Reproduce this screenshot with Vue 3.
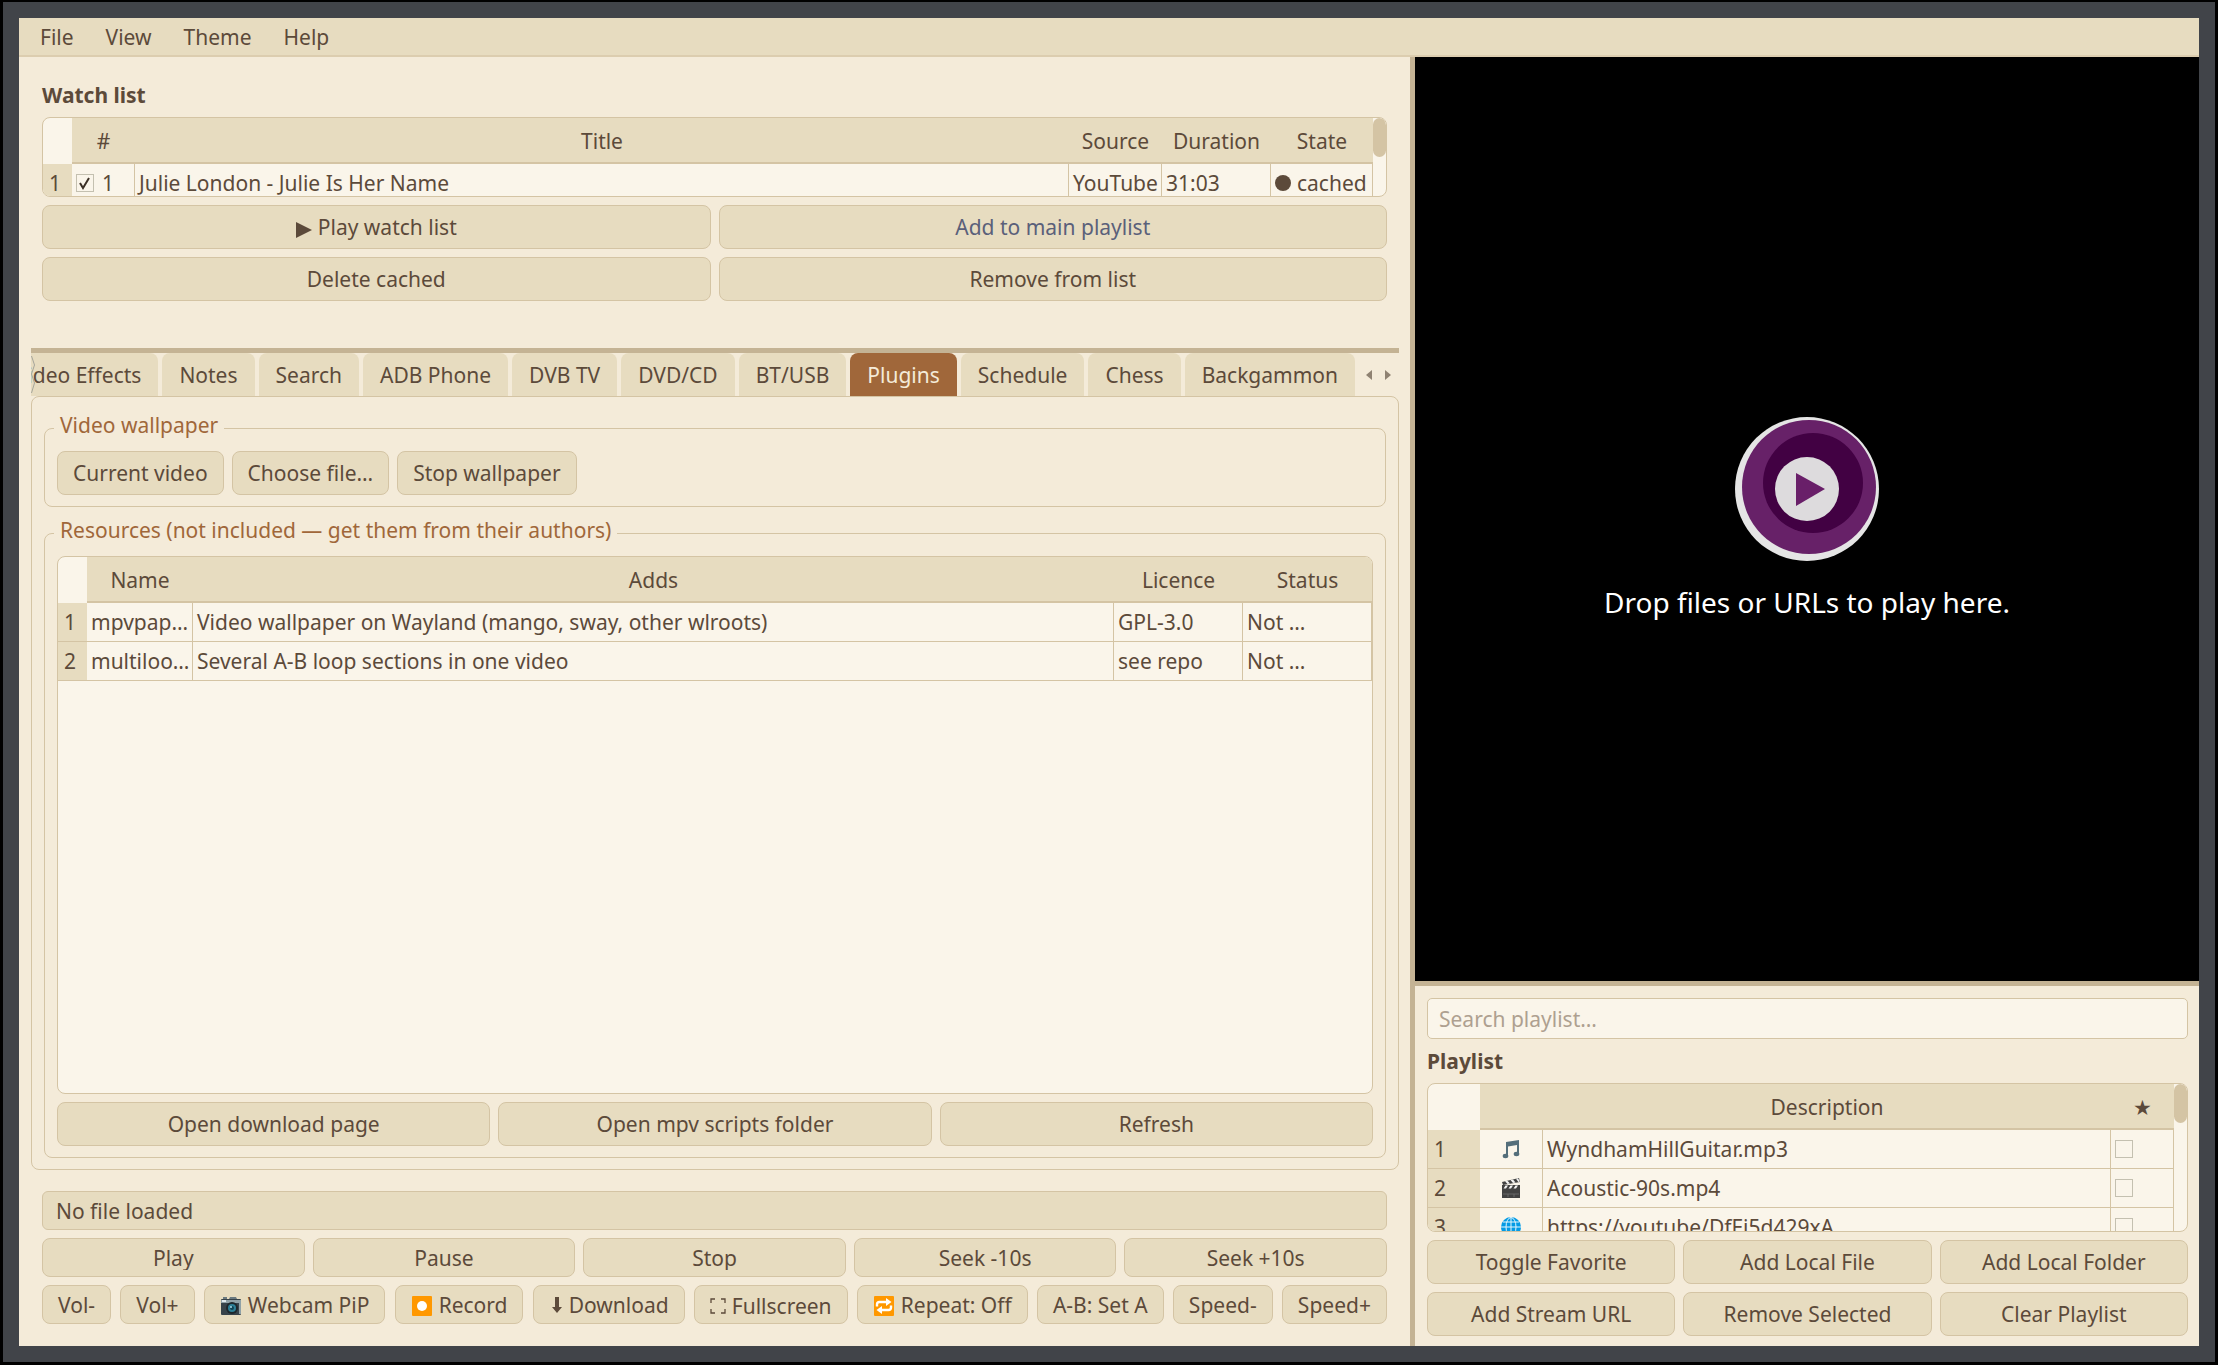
<script setup>
import { ref } from 'vue'

const menus = ['File', 'View', 'Theme', 'Help']
const tabs = [
  'Video Effects', 'Notes', 'Search', 'ADB Phone', 'DVB TV', 'DVD/CD',
  'BT/USB', 'Plugins', 'Schedule', 'Chess', 'Backgammon'
]
const activeTab = ref('Plugins')
const resources = [
  { name: 'mpvpap…', adds: 'Video wallpaper on Wayland (mango, sway, other wlroots)', licence: 'GPL-3.0', status: 'Not …' },
  { name: 'multiloo…', adds: 'Several A-B loop sections in one video', licence: 'see repo', status: 'Not …' }
]
const transport = ['Play', 'Pause', 'Stop', 'Seek -10s', 'Seek +10s']
const playlist = [
  { icon: 'music', title: 'WyndhamHillGuitar.mp3' },
  { icon: 'clapper', title: 'Acoustic-90s.mp4' },
  { icon: 'globe', title: 'https://youtube/DfEj5d429xA' }
]
const playlistActions = [
  'Toggle Favorite', 'Add Local File', 'Add Local Folder',
  'Add Stream URL', 'Remove Selected', 'Clear Playlist'
]
const watched = ref(true)
const query = ref('')
</script>

<template>
  <div class="screen">
    <div class="window">
      <nav class="menubar">
        <button v-for="m in menus" :key="m" type="button">{{ m }}</button>
      </nav>

      <div class="body">
        <main class="left">
          <section class="watch">
            <h2>Watch list</h2>
            <div class="table-box watch-box">
              <table>
                <colgroup>
                  <col class="c-row"><col class="c-num"><col><col class="c-source"><col class="c-duration"><col class="c-state">
                </colgroup>
                <thead>
                  <tr><td class="corner"></td><th>#</th><th>Title</th><th>Source</th><th>Duration</th><th>State</th></tr>
                </thead>
                <tbody>
                  <tr>
                    <th scope="row">1</th>
                    <td><label class="check"><input v-model="watched" type="checkbox">1</label></td>
                    <td>Julie London - Julie Is Her Name</td>
                    <td>YouTube</td>
                    <td>31:03</td>
                    <td><span class="state"><i class="dot"></i>cached</span></td>
                  </tr>
                </tbody>
              </table>
              <div class="scroll"><div class="thumb"></div></div>
            </div>
            <div class="grid two">
              <button class="btn" type="button">
                <svg class="play-glyph" viewBox="0 0 16 16"><path d="M0 0L16 8L0 16Z" fill="currentColor" /></svg>Play watch list
              </button>
              <button class="btn blue" type="button">Add to main playlist</button>
              <button class="btn" type="button">Delete cached</button>
              <button class="btn" type="button">Remove from list</button>
            </div>
          </section>

          <section class="tools">
            <div class="tabbar">
              <div class="tabs" role="tablist">
                <button
                  v-for="t in tabs" :key="t" type="button" role="tab" class="tab"
                  :class="{ active: t === activeTab }" :aria-selected="t === activeTab" @click="activeTab = t"
                >{{ t }}</button>
                <svg class="tear" viewBox="0 0 5 40" fill="none" stroke="#a5a59a"><path d="M0.5 1L3.5 10L0.5 19L3.5 28L0.5 38" /></svg>
              </div>
              <button class="arrow" type="button" aria-label="Scroll tabs left">
                <svg viewBox="0 0 6 10"><path d="M6 0V10L0 5Z" fill="#8f8272" /></svg>
              </button>
              <button class="arrow" type="button" aria-label="Scroll tabs right">
                <svg viewBox="0 0 6 10"><path d="M0 0V10L6 5Z" fill="#8f8272" /></svg>
              </button>
            </div>

            <div class="pane">
              <fieldset>
                <legend>Video wallpaper</legend>
                <div class="inline">
                  <button class="btn" type="button">Current video</button>
                  <button class="btn" type="button">Choose file…</button>
                  <button class="btn" type="button">Stop wallpaper</button>
                </div>
              </fieldset>
              <fieldset class="resources">
                <legend>Resources (not included — get them from their authors)</legend>
                <div class="table-box fill">
                  <table>
                    <colgroup>
                      <col class="c-row"><col class="c-name"><col><col class="c-wide"><col class="c-wide">
                    </colgroup>
                    <thead>
                      <tr><td class="corner"></td><th>Name</th><th>Adds</th><th>Licence</th><th>Status</th></tr>
                    </thead>
                    <tbody>
                      <tr v-for="(r, i) in resources" :key="r.name">
                        <th scope="row">{{ i + 1 }}</th>
                        <td>{{ r.name }}</td><td>{{ r.adds }}</td><td>{{ r.licence }}</td><td>{{ r.status }}</td>
                      </tr>
                    </tbody>
                  </table>
                </div>
                <div class="grid three">
                  <button class="btn" type="button">Open download page</button>
                  <button class="btn" type="button">Open mpv scripts folder</button>
                  <button class="btn" type="button">Refresh</button>
                </div>
              </fieldset>
            </div>
          </section>

          <section class="controls">
            <div class="status">No file loaded</div>
            <div class="grid five">
              <button v-for="t in transport" :key="t" class="btn short" type="button"><span class="clip">{{ t }}</span></button>
            </div>
            <div class="spread">
              <button class="btn short" type="button">Vol-</button>
              <button class="btn short" type="button">Vol+</button>
              <button class="btn short" type="button">
                <svg class="emoji" viewBox="0 0 22 22">
                  <path d="M3 2h4v3H3z" fill="#6b7a80" />
                  <path d="M8 6L10 2h6l2 4z" fill="#6b7a80" />
                  <rect x="1" y="4" width="20" height="16" rx="1" fill="#37434a" />
                  <path d="M1 5h20v3H1z" fill="#8fa1a7" />
                  <rect x="2" y="5" width="4" height="2" fill="#dfe9ec" />
                  <path d="M19 8h2v11h-2z" fill="#8fa1a7" />
                  <circle cx="12" cy="13" r="6" fill="#1d272c" />
                  <circle cx="12" cy="13" r="4" fill="#2c7f96" />
                  <circle cx="12" cy="13" r="2" fill="#0f4253" />
                  <circle cx="11" cy="12" r="1" fill="#a9dbe8" />
                </svg>Webcam PiP
              </button>
              <button class="btn short" type="button">
                <svg class="emoji" viewBox="0 0 22 22">
                  <rect x="1" y="1" width="20" height="20" rx="1" fill="#ff9800" />
                  <circle cx="11" cy="11" r="5" fill="#fff" />
                </svg>Record
              </button>
              <button class="btn short" type="button">
                <svg class="down" viewBox="0 0 12 18"><path d="M4 1h4v10h3L6 17L1 11h3z" fill="currentColor" /></svg>Download
              </button>
              <button class="btn short full" type="button">
                <svg class="corners" viewBox="0 0 16 16" fill="none" stroke="currentColor" stroke-width="1.3">
                  <path d="M1 5V1H5M11 1H15V5M15 11V15H11M5 15H1V11" />
                </svg>Fullscreen
              </button>
              <button class="btn short" type="button">
                <svg class="emoji" viewBox="0 0 22 22">
                  <rect x="1" y="1" width="20" height="20" rx="1" fill="#ff9800" />
                  <g fill="none" stroke="#fff" stroke-width="2.4">
                    <path d="M4 11.5V9.5Q4 7 6.500 7H14" /><path d="M18 10.500V12.500Q18 15 15.500 15H8" />
                  </g>
                  <path d="M13 3L18.500 7L13 11ZM9 11L3.500 15L9 19Z" fill="#fff" />
                </svg>Repeat: Off
              </button>
              <button class="btn short" type="button">A-B: Set A</button>
              <button class="btn short" type="button">Speed-</button>
              <button class="btn short" type="button">Speed+</button>
            </div>
          </section>
        </main>

        <aside class="right">
          <div class="video">
            <svg class="logo" viewBox="0 0 144 144">
              <circle cx="72" cy="72" r="72" fill="#e5e5e5" />
              <circle cx="74" cy="70" r="67" fill="#672168" />
              <circle cx="78" cy="66" r="50" fill="#420143" />
              <circle cx="72" cy="72" r="32" fill="#dddbdd" />
              <path d="M61 56V89L90 72Z" fill="#691f69" />
            </svg>
            <p>Drop files or URLs to play here.</p>
          </div>
          <section class="list">
            <input v-model="query" class="search" type="text" placeholder="Search playlist…" aria-label="Search playlist">
            <h2>Playlist</h2>
            <div class="table-box list-box">
              <table>
                <colgroup>
                  <col class="c-index"><col class="c-icon"><col><col class="c-icon">
                </colgroup>
                <thead>
                  <tr><td class="corner"></td><th></th><th>Description</th><th>★</th></tr>
                </thead>
                <tbody>
                  <tr v-for="(p, i) in playlist" :key="p.title">
                    <th scope="row">{{ i + 1 }}</th>
                    <td class="icon">
                      <svg v-if="p.icon === 'music'" viewBox="0 0 20 20">
                        <path d="M5 3L18 1V15H16V6L7 7.500V17H5Z" fill="#546e7a" />
                        <ellipse cx="4.500" cy="17" rx="2.800" ry="2.200" fill="#546e7a" /><ellipse cx="15.500" cy="15" rx="2.800" ry="2.200" fill="#546e7a" />
                      </svg>
                      <svg v-else-if="p.icon === 'clapper'" viewBox="0 0 20 20">
                        <path d="M1 4L18 0L19 4L2 7Z" fill="#424242" />
                        <path d="M4 3.300L6.500 2.700L9 5.500L6.500 6ZM9.500 2L12 1.400L14.500 4.400L12 5ZM15 .7L17 .2L18.800 3.500L17.300 3.900Z" fill="#f3f3f3" />
                        <rect x="1" y="7" width="18" height="13" fill="#424242" />
                        <path d="M4.500 7.500H7L5 10.500H2.500ZM9.500 7.500H12L10 10.500H7.500ZM14.500 7.500H17L15 10.500H12.500Z" fill="#f3f3f3" />
                        <path d="M2 16H18M7 16V19M13 16V19" stroke="#777" stroke-width=".7" />
                      </svg>
                      <svg v-else viewBox="0 0 20 20">
                        <circle cx="10" cy="10" r="10" fill="#039be5" />
                        <g fill="none" stroke="#e4f5fc" stroke-width="1">
                          <ellipse cx="10" cy="10" rx="5" ry="9.500" />
                          <path d="M10 0V20M0 10H20M2 5H18M2 15H18" />
                        </g>
                      </svg>
                    </td>
                    <td>{{ p.title }}</td>
                    <td><input type="checkbox" class="fav" :aria-label="'Favorite ' + p.title"></td>
                  </tr>
                </tbody>
              </table>
              <div class="scroll"><div class="thumb"></div></div>
            </div>
            <div class="grid three">
              <button v-for="a in playlistActions" :key="a" class="btn" type="button">{{ a }}</button>
            </div>
          </section>
        </aside>
      </div>
    </div>
  </div>
</template>

<style>
body {
  margin: 0;
  background: #000;
}
</style>

<style scoped>
.screen,
.screen * {
  box-sizing: border-box;
}
.screen {
  --bg: #f4ebd9;
  --sand: #e7dcc0;
  --cream: #faf5ea;
  --line: #d4c4a4;
  --split: #c4b394;
  --ink: #5c4a3a;
  --rust: #a0673a;
  display: flex;
  height: 100vh;
  padding: 2px 3px 3px;
  background: #000;
  color: var(--ink);
  font: 21px/28px "Noto Sans", sans-serif;
}
.window {
  flex: 1;
  display: flex;
  flex-direction: column;
  min-width: 0;
  border: 16px solid #414449;
  background: var(--bg);
}
button,
input {
  font: inherit;
  color: inherit;
}
h2 {
  margin: 0;
  font-size: 21px;
  line-height: 28px;
  font-weight: 700;
}
.menubar {
  display: flex;
  height: 39px;
  padding-left: 5px;
  border-bottom: 2px solid #dccdaf;
  background: var(--sand);
}
.menubar button {
  padding: 0 16px;
  border: 0;
  background: none;
}
.body {
  flex: 1;
  display: grid;
  grid-template-columns: minmax(0, 1396fr) minmax(0, 784fr);
  min-height: 0;
}
.left {
  display: flex;
  flex-direction: column;
  min-width: 0;
  min-height: 0;
  border-right: 5px solid var(--split);
}
.watch {
  display: flex;
  flex-direction: column;
  gap: 8px;
  padding: 24px 23px 47px;
}

.btn {
  height: 44px;
  padding: 0 15px;
  border: 1px solid var(--line);
  border-radius: 8px;
  background: var(--sand);
  line-height: 28px;
  white-space: nowrap;
}
.btn.short {
  height: 39px;
}
.btn.blue {
  color: #5a607a;
}
.grid {
  display: grid;
  gap: 8px;
}
.two {
  grid-template-columns: repeat(2, minmax(0, 1fr));
}
.three {
  grid-template-columns: repeat(3, minmax(0, 1fr));
}
.five {
  grid-template-columns: repeat(5, minmax(0, 1fr));
}
.play-glyph {
  width: 16px;
  height: 16px;
  margin-right: 6px;
  vertical-align: -3px;
}

.table-box {
  display: flex;
  align-items: flex-start;
  overflow: hidden;
  border: 1px solid var(--line);
  border-radius: 8px;
  background: var(--cream);
}
.watch-box {
  height: 80px;
}
.list-box {
  height: 149px;
}
table {
  flex: 1;
  width: 0;
  table-layout: fixed;
  border-collapse: separate;
  border-spacing: 0;
}
th,
td {
  padding: 0 4px;
  overflow: hidden;
  white-space: nowrap;
  font-weight: 400;
}
thead th {
  height: 46px;
  padding-top: 2px;
  border-bottom: 2px solid var(--line);
  background: var(--sand);
}
tbody th {
  padding: 0 6px;
  border-bottom: 1px solid var(--line);
  background: var(--sand);
  text-align: left;
}
tbody td {
  height: 39px;
  border-right: 1px solid var(--line);
  border-bottom: 1px solid var(--line);
}
.c-row { width: 29px; }
.c-num { width: 63px; }
.c-source { width: 93px; }
.c-duration { width: 109px; }
.c-state { width: 102px; }
.c-name { width: 106px; }
.c-wide { width: 129px; }
.c-index { width: 52px; }
.c-icon { width: 63px; }
.scroll {
  align-self: stretch;
  width: 13px;
}
.thumb {
  width: 13px;
  height: 39px;
  border-radius: 7px;
  background: var(--line);
}
input[type="checkbox"] {
  appearance: none;
  display: block;
  width: 18px;
  height: 18px;
  margin: 0;
  border: 1px solid #c4c0b0;
  background: var(--cream);
}
input[type="checkbox"]:checked {
  background: url("data:image/svg+xml,%3Csvg xmlns='http://www.w3.org/2000/svg' viewBox='0 0 16 16'%3E%3Cpath d='M3 8L6 13L12 3' fill='none' stroke='%233c3026' stroke-width='2'/%3E%3C/svg%3E") center / 16px 16px no-repeat;
}
.check,
.state {
  display: flex;
  align-items: center;
  gap: 8px;
}
.dot {
  width: 16px;
  height: 16px;
  border-radius: 50%;
  background: var(--ink);
}
.state {
  gap: 6px;
}
.icon svg {
  display: block;
  width: 20px;
  height: 20px;
  margin: 0 auto;
}

.tools {
  flex: 1;
  display: flex;
  flex-direction: column;
  min-height: 0;
  margin: 0 11px 0 12px;
  border-top: 5px solid var(--split);
}
.tabbar {
  display: flex;
  align-items: center;
  height: 43px;
  padding-right: 2px;
}
.tabs {
  position: relative;
  flex: 1;
  display: flex;
  justify-content: flex-end;
  gap: 4px;
  height: 43px;
  margin-right: 4px;
  overflow: hidden;
}
.tab {
  flex: none;
  padding: 0 17px;
  border: 0;
  border-radius: 8px 8px 0 0;
  background: var(--sand);
}
.tab.active {
  background: var(--rust);
  color: #f4ebd9;
}
.tear {
  position: absolute;
  top: 2px;
  left: 0;
  width: 5px;
  height: 40px;
}
.arrow {
  display: flex;
  width: 19px;
  height: 24px;
  padding: 0 4px;
  border: 0;
  background: none;
  align-items: center;
  justify-content: center;
}
.arrow svg {
  flex: none;
  width: 6px;
  height: 10px;
}
.pane {
  flex: 1;
  display: flex;
  flex-direction: column;
  gap: 9px;
  min-height: 0;
  padding: 14px 12px 11px;
  border: 1px solid var(--line);
  border-radius: 8px;
}
fieldset {
  min-width: 0;
  margin: 0;
  padding: 6px 12px 11px;
  border: 1px solid var(--line);
  border-radius: 8px;
}
legend {
  margin-left: -3px;
  padding: 0 6px 6px;
  color: var(--rust);
}
.inline {
  display: flex;
  gap: 8px;
}
.resources {
  flex: 1;
  min-height: 0;
  display: flex;
  flex-direction: column;
  gap: 8px;
}
.fill {
  flex: 1;
}

.controls {
  display: flex;
  flex-direction: column;
  gap: 8px;
  padding: 21px 23px 22px;
}
.status {
  height: 39px;
  padding: 5px 13px;
  border: 1px solid var(--line);
  border-radius: 6px;
  background: var(--sand);
}
.clip {
  display: block;
  height: 24px;
  line-height: 24px;
  overflow: hidden;
}
.spread {
  display: flex;
  justify-content: space-between;
}
.emoji {
  width: 22px;
  height: 22px;
  margin-right: 6px;
  vertical-align: -4px;
}
.down {
  width: 12px;
  height: 18px;
  margin: 0 6px 0 2px;
  vertical-align: -1px;
}
.corners {
  width: 16px;
  height: 16px;
  margin-right: 6px;
  vertical-align: 0;
}
.full {
  padding-top: 3px;
}

.right {
  display: flex;
  flex-direction: column;
  min-width: 0;
  min-height: 0;
}
.video {
  flex: 1;
  display: flex;
  flex-direction: column;
  align-items: center;
  justify-content: center;
  gap: 22px;
  background: #000;
  color: #fff;
}
.logo {
  width: 144px;
  height: 144px;
}
.video p {
  margin: 0;
  font-size: 28px;
  line-height: 38px;
}
.list {
  display: flex;
  flex-direction: column;
  gap: 8px;
  padding: 12px 11px 10px 12px;
  border-top: 5px solid var(--split);
}
.search {
  height: 41px;
  padding: 0 11px;
  border: 1px solid var(--line);
  border-radius: 5px;
  background: var(--cream);
}
.search::placeholder {
  color: #aea090;
  opacity: 1;
}
</style>
